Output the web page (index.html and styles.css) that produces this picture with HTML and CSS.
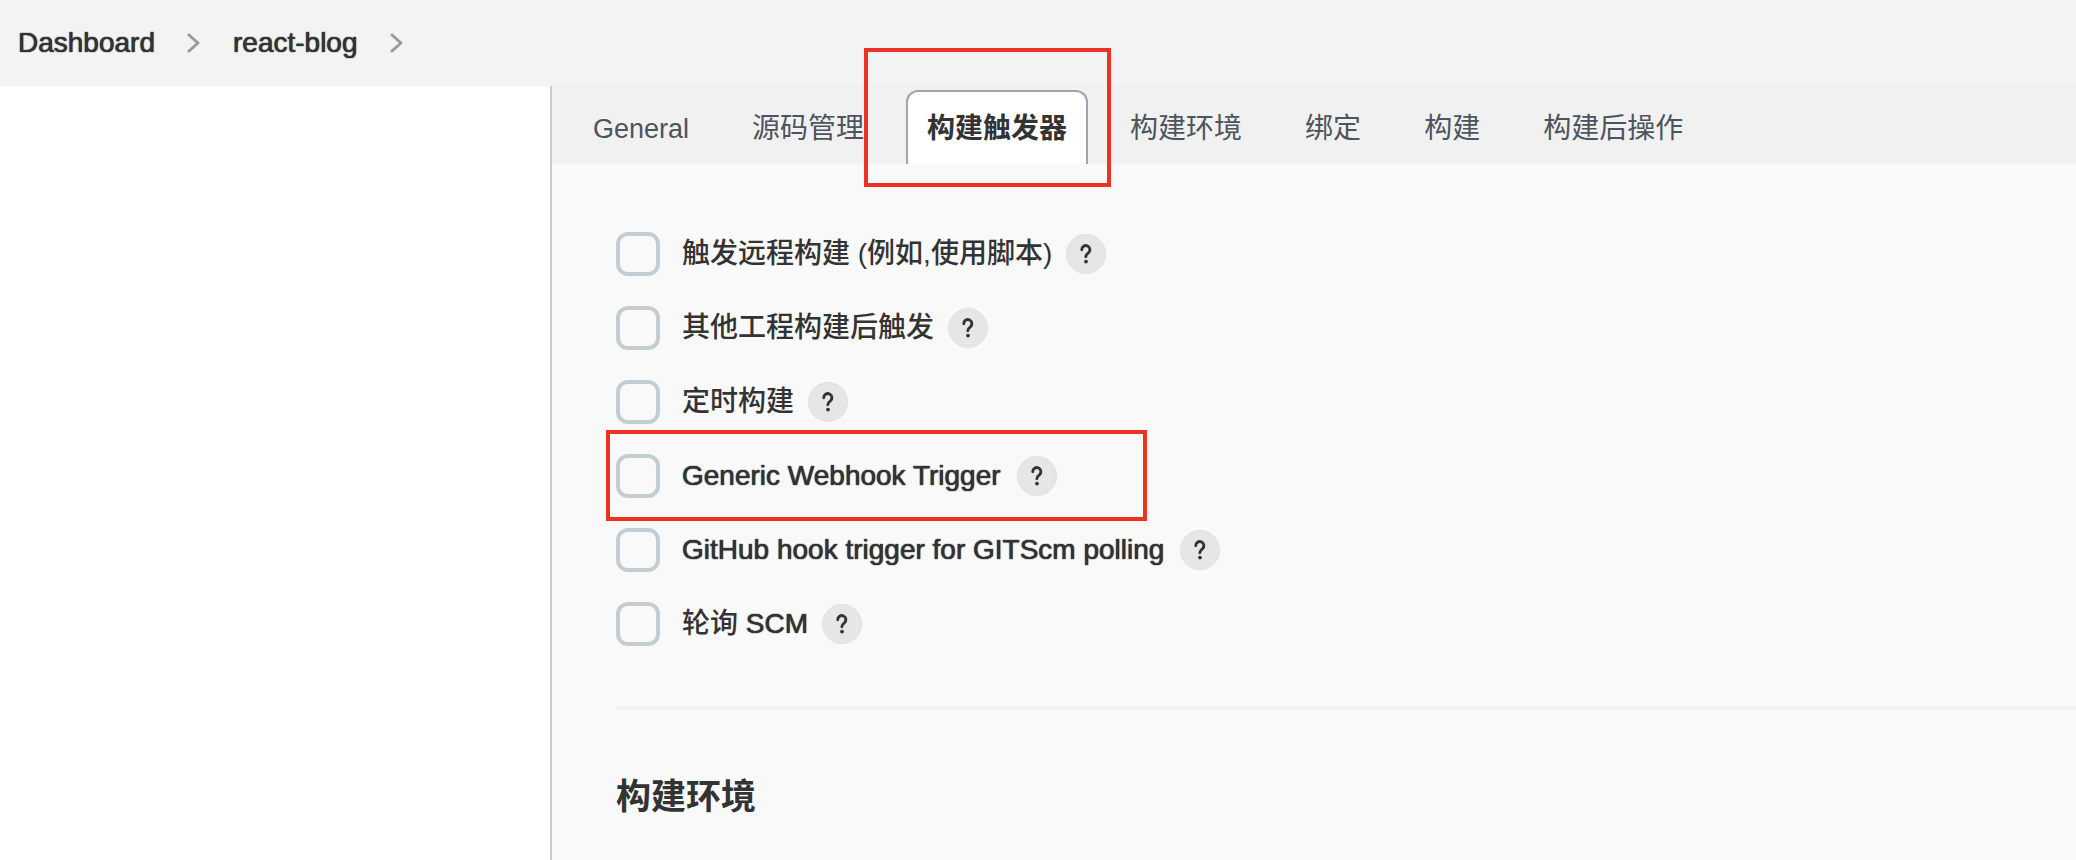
FILE: index.html
```
<!DOCTYPE html>
<html lang="zh-CN">
<head>
<meta charset="utf-8">
<meta name="viewport" content="width=device-width, initial-scale=1">
<title>react-blog Config</title>
<link rel="stylesheet" href="styles.css">
</head>
<body>
<nav class="breadcrumbs latin" aria-label="Breadcrumb">
  <a href="#">Dashboard</a>
  <svg class="chevron" viewBox="0 0 14 20" aria-hidden="true"><path d="M2 2l9 8-9 8"/></svg>
  <a href="#">react-blog</a>
  <svg class="chevron" viewBox="0 0 14 20" aria-hidden="true"><path d="M2 2l9 8-9 8"/></svg>
</nav>
<div class="layout">
  <aside class="side-panel"></aside>
  <main class="main-panel">
    <ul class="tabs">
      <li><a class="tab tab-latin" href="#">General</a></li>
      <li><a class="tab" href="#">源码管理</a></li>
      <li class="marked"><a class="tab tab-active" href="#" aria-current="page">构建触发器</a><span class="mark mark-tab"></span></li>
      <li><a class="tab" href="#">构建环境</a></li>
      <li><a class="tab" href="#">绑定</a></li>
      <li><a class="tab" href="#">构建</a></li>
      <li><a class="tab" href="#">构建后操作</a></li>
    </ul>
    <form class="config">
      <ul class="triggers">
        <li class="trigger"><input type="checkbox" id="remote"><label for="remote">触发远程构建 (例如,使用脚本)</label><button class="help" type="button" aria-label="Help"><svg viewBox="0 0 40 40"><path d="M15.500 15.500a4.300 4.300 0 1 1 7 3.300c-1.700 1.300-2.700 2.200-2.700 4.200"/><circle cx="20" cy="28" r="2"/></svg></button></li>
        <li class="trigger"><input type="checkbox" id="upstream"><label for="upstream">其他工程构建后触发</label><button class="help" type="button" aria-label="Help"><svg viewBox="0 0 40 40"><path d="M15.500 15.500a4.300 4.300 0 1 1 7 3.300c-1.700 1.300-2.700 2.200-2.700 4.200"/><circle cx="20" cy="28" r="2"/></svg></button></li>
        <li class="trigger"><input type="checkbox" id="timer"><label for="timer">定时构建</label><button class="help" type="button" aria-label="Help"><svg viewBox="0 0 40 40"><path d="M15.500 15.500a4.300 4.300 0 1 1 7 3.300c-1.700 1.300-2.700 2.200-2.700 4.200"/><circle cx="20" cy="28" r="2"/></svg></button></li>
        <li class="trigger marked"><input type="checkbox" id="webhook"><label class="latin" for="webhook">Generic Webhook Trigger</label><button class="help" type="button" aria-label="Help"><svg viewBox="0 0 40 40"><path d="M15.500 15.500a4.300 4.300 0 1 1 7 3.300c-1.700 1.300-2.700 2.200-2.700 4.200"/><circle cx="20" cy="28" r="2"/></svg></button><span class="mark mark-row"></span></li>
        <li class="trigger"><input type="checkbox" id="github"><label class="latin" for="github">GitHub hook trigger for GITScm polling</label><button class="help" type="button" aria-label="Help"><svg viewBox="0 0 40 40"><path d="M15.500 15.500a4.300 4.300 0 1 1 7 3.300c-1.700 1.300-2.700 2.200-2.700 4.200"/><circle cx="20" cy="28" r="2"/></svg></button></li>
        <li class="trigger"><input type="checkbox" id="scm"><label for="scm">轮询 <span class="latin">SCM</span></label><button class="help" type="button" aria-label="Help"><svg viewBox="0 0 40 40"><path d="M15.500 15.500a4.300 4.300 0 1 1 7 3.300c-1.700 1.300-2.700 2.200-2.700 4.200"/><circle cx="20" cy="28" r="2"/></svg></button></li>
      </ul>
      <hr class="divider">
      <h2 class="section-title">构建环境</h2>
    </form>
  </main>
</div>
</body>
</html>
```
FILE: styles.css
```
* {
  box-sizing: border-box;
}

body {
  margin: 0;
  min-height: 100vh;
  display: flex;
  flex-direction: column;
  background: #fff;
  color: #333;
  font-family: "Liberation Sans", "Noto Sans CJK SC", sans-serif;
  font-size: 28px;
  line-height: 40px;
}

ul {
  margin: 0;
  padding: 0;
  list-style: none;
}

a {
  color: inherit;
  text-decoration: none;
}

/* Liberation Sans has no medium weight, so thicken its regular one */
.latin {
  text-shadow: 0 0 1px currentColor, 0 0 1px currentColor;
}

.breadcrumbs {
  display: flex;
  align-items: center;
  gap: 32px;
  height: 86px;
  padding: 0 18px;
  background: #f3f3f3;
}

.chevron {
  width: 14px;
  height: 20px;
  fill: none;
  stroke: #999;
  stroke-width: 3;
  stroke-linecap: round;
  stroke-linejoin: round;
}

.layout {
  flex: 1;
  display: flex;
}

.side-panel {
  flex: 0 0 550px;
}

.main-panel {
  flex: 1;
  min-width: 0;
  border-left: 2px solid #c4cdd1;
  background: #f9f9f9;
}

.tabs {
  display: flex;
  gap: 21px;
  padding: 4px 20px 0;
  background: #f1f1f1;
  white-space: nowrap;
}

.tab {
  display: block;
  padding: 17px 19px 15px;
  border: 2px solid transparent;
  border-bottom: 0;
  border-radius: 12px 12px 0 0;
  color: #4d545d;
}

.tab-latin {
  font-size: 27px;
}

.tab-active {
  border-color: #9ba8af;
  background: #fff;
  color: #333;
  font-weight: 600;
}

.marked {
  position: relative;
}

.mark {
  position: absolute;
  z-index: 1;
  border: 4px solid #ed3224;
  pointer-events: none;
}

.mark-tab {
  inset: -42px -23px -23px -42px;
}

.mark-row {
  inset: -24px -90px -23px -10px;
}

.config {
  padding: 68px 0 40px 64px;
}

.triggers {
  display: flex;
  flex-direction: column;
  align-items: flex-start;
  gap: 30px;
}

.trigger {
  display: flex;
  align-items: center;
  height: 44px;
  font-weight: 500;
}

.trigger input {
  appearance: none;
  width: 44px;
  height: 44px;
  margin: 0 22px 0 0;
  border: 4px solid #c4cdd1;
  border-radius: 12px;
}

.help {
  width: 40px;
  height: 40px;
  margin: 0 0 0 14px;
  padding: 0;
  border: 1px solid #e0e0e0;
  border-radius: 50%;
  background: #e6e6e6;
}

.latin + .help {
  margin-left: 16px;
}

.help svg {
  display: block;
  width: 38px;
  height: 38px;
  fill: none;
  stroke: #333;
  stroke-width: 3;
  stroke-linecap: round;
}

.help circle {
  fill: #333;
  stroke: none;
}

.divider {
  height: 4px;
  margin: 60px 0 0;
  border: 0;
  background: #f1f1f1;
}

.section-title {
  margin: 62px 0 0;
  font-size: 35px;
  font-weight: 600;
  line-height: 50px;
}
```
